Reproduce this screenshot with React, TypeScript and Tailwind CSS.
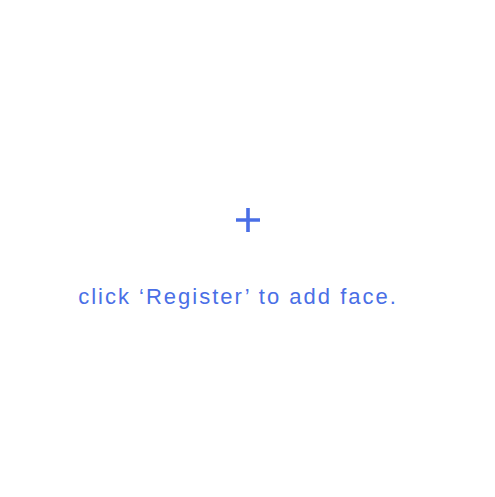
export default function App() {
  return (
    <div className="w-[495px] h-[497px] bg-white flex flex-col items-center font-['Liberation_Sans',Arial,sans-serif] text-[#4169e1]">
      <svg className="mt-[208px]" width="24" height="24" viewBox="0 0 24 24">
        <path d="M12 0V24M0 12H24" stroke="#4a6fe6" strokeWidth="3.6" />
      </svg>
      <p className="mt-[52px] text-[22px] leading-[26px] tracking-[2px] pr-[19px] text-[#4a6fe6]">click ‘Register’ to add face.</p>
    </div>
  );
}
